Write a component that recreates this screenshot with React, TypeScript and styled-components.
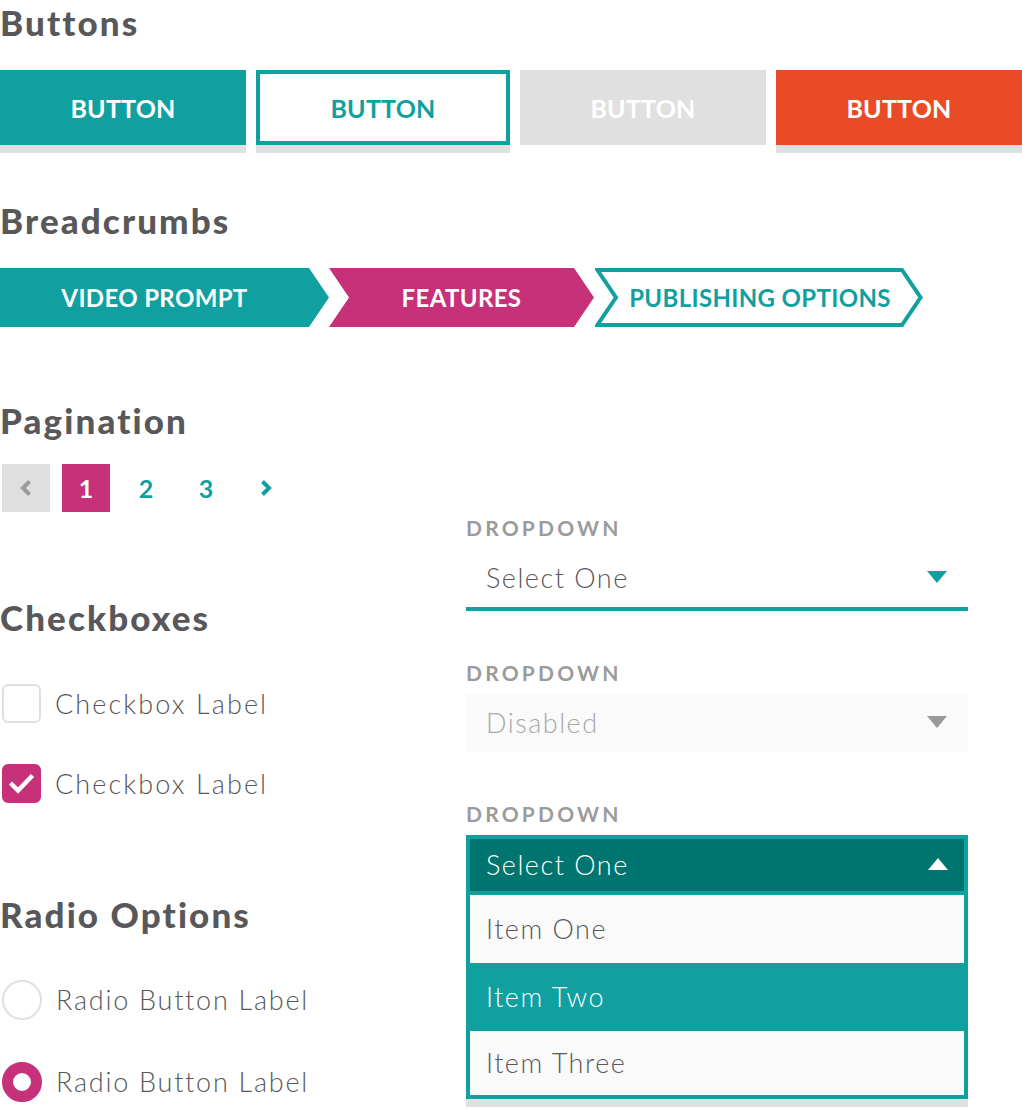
import React from "react";
import styled, { createGlobalStyle } from "styled-components";

const TEAL = "#0fa09f";
const DARK_TEAL = "#00756f";
const MAGENTA = "#c6317a";
const ORANGE = "#e94b27";
const GRAY = "#e0e0e0";
const TEXT = "#58585a";
const LABEL = "#9b9b9b";

const GlobalStyle = createGlobalStyle`
  html, body { margin: 0; padding: 0; background: #ffffff; }
  body { font-family: "Lato", "Open Sans", sans-serif; color: ${TEXT}; overflow: hidden; }
  * { box-sizing: border-box; }
`;

const Page = styled.div`
  width: 1022px;
  display: flex;
  flex-direction: column;
`;

const Heading = styled.h2<{ $mt: number; $mb: number }>`
  margin: ${(p) => p.$mt}px 0 ${(p) => p.$mb}px;
  font-family: "Lato", sans-serif;
  font-weight: 900;
  font-size: 35px;
  line-height: 40px;
  letter-spacing: 2.1px;
  color: ${TEXT};
`;

const ButtonRow = styled.div`
  display: flex;
  gap: 10px;
`;

type BtnKind = "primary" | "outline" | "disabled" | "danger";

const Button = styled.button<{ $kind: BtnKind }>`
  flex: 1;
  height: 75px;
  padding: 0;
  margin: 0;
  font-family: "Lato", sans-serif;
  font-weight: 700;
  font-size: 25px;
  letter-spacing: 0.2px;
  cursor: pointer;
  border: ${(p) => (p.$kind === "outline" ? `4px solid ${TEAL}` : "none")};
  background: ${(p) =>
    p.$kind === "primary" ? TEAL : p.$kind === "outline" ? "#fff" : p.$kind === "disabled" ? GRAY : ORANGE};
  color: ${(p) => (p.$kind === "outline" ? TEAL : "#fff")};
  box-shadow: ${(p) => (p.$kind === "disabled" ? "none" : `0 8px 0 ${GRAY}`)};
`;

const CrumbRow = styled.div`
  display: flex;
  height: 59px;
`;

const Crumb = styled.div<{ $w: number; $bg: string; $first?: boolean }>`
  position: relative;
  width: ${(p) => p.$w}px;
  height: 59px;
  flex: none;
  display: flex;
  align-items: center;
  justify-content: center;
  padding-left: ${(p) => (p.$first ? 0 : 20)}px;
  padding-right: 20px;
  background: ${(p) => p.$bg};
  clip-path: ${(p) =>
    p.$first
      ? "polygon(0 0, calc(100% - 20px) 0, 100% 50%, calc(100% - 20px) 100%, 0 100%)"
      : "polygon(0 0, calc(100% - 20px) 0, 100% 50%, calc(100% - 20px) 100%, 0 100%, 20px 50%)"};
`;

const OutlineCrumb = styled.div<{ $w: number }>`
  position: relative;
  width: ${(p) => p.$w}px;
  height: 59px;
  flex: none;
  margin-left: 1px;
  display: flex;
  align-items: center;
  justify-content: center;
  padding-left: 22px;
  padding-right: 20px;
`;

const CrumbShape = styled.svg`
  position: absolute;
  inset: 0;
`;

const CrumbText = styled.span<{ $color: string }>`
  position: relative;
  font-family: "Lato", sans-serif;
  font-weight: 700;
  font-size: 24px;
  letter-spacing: 0.35px;
  color: ${(p) => p.$color};
  white-space: nowrap;
`;

const Columns = styled.div`
  display: grid;
  grid-template-columns: 466px 502px;
`;

const Column = styled.div<{ $pt?: number }>`
  display: flex;
  flex-direction: column;
  padding-top: ${(p) => p.$pt ?? 0}px;
`;

const Pager = styled.div`
  display: flex;
  gap: 12px;
  padding-left: 2px;
`;

type PageKind = "prev" | "active" | "plain";

const PageItem = styled.div<{ $kind: PageKind }>`
  width: 48px;
  height: 48px;
  display: flex;
  align-items: center;
  justify-content: center;
  font-family: "Lato", sans-serif;
  font-weight: 700;
  font-size: 25px;
  background: ${(p) => (p.$kind === "prev" ? GRAY : p.$kind === "active" ? MAGENTA : "transparent")};
  color: ${(p) => (p.$kind === "active" ? "#fff" : TEAL)};
`;

const OptionList = styled.div<{ $gap: number }>`
  display: flex;
  flex-direction: column;
  gap: ${(p) => p.$gap}px;
  padding-left: 2px;
`;

const OptionRow = styled.label`
  display: flex;
  align-items: center;
  gap: 14px;
  height: 39px;
`;

const CheckBox = styled.span<{ $checked?: boolean }>`
  width: 39px;
  height: 39px;
  flex: none;
  border-radius: 6px;
  border: 2px solid ${(p) => (p.$checked ? MAGENTA : GRAY)};
  background: ${(p) => (p.$checked ? MAGENTA : "#fff")};
  display: flex;
  align-items: center;
  justify-content: center;
`;

const Radio = styled.span<{ $checked?: boolean }>`
  width: 40px;
  height: 40px;
  flex: none;
  border-radius: 50%;
  border: ${(p) => (p.$checked ? `11px solid ${MAGENTA}` : `2px solid ${GRAY}`)};
  background: #fff;
`;

const OptionLabel = styled.span<{ $ls: number }>`
  font-family: "Lato", sans-serif;
  font-weight: 300;
  font-size: 27px;
  letter-spacing: ${(p) => p.$ls}px;
  color: ${TEXT};
  white-space: nowrap;
`;

const Field = styled.div`
  display: flex;
  flex-direction: column;
  margin-bottom: 50px;
`;

const FieldLabel = styled.div`
  font-family: "Lato", sans-serif;
  font-weight: 700;
  font-size: 21px;
  line-height: 24px;
  letter-spacing: 3.2px;
  color: ${LABEL};
  margin-bottom: 9px;
`;

type SelectKind = "default" | "disabled";

const SelectBox = styled.div<{ $kind: SelectKind }>`
  height: ${(p) => (p.$kind === "default" ? 62 : 58)}px;
  display: flex;
  align-items: center;
  justify-content: space-between;
  padding: 0 21px 2px 20px;
  background: ${(p) => (p.$kind === "disabled" ? "#fafafa" : "#fff")};
  border-bottom: ${(p) => (p.$kind === "default" ? `4px solid ${TEAL}` : "none")};
`;

const SelectText = styled.span<{ $color: string }>`
  font-family: "Lato", sans-serif;
  font-weight: 300;
  font-size: 27px;
  letter-spacing: 1.5px;
  color: ${(p) => p.$color};
`;

const OpenSelect = styled.div`
  border: 4px solid ${TEAL};
  background: ${TEAL};
  box-shadow: 0 8px 0 ${GRAY};
  display: flex;
  flex-direction: column;
`;

const OpenHeader = styled.div`
  height: 56px;
  border-bottom: 4px solid ${TEAL};
  background: ${DARK_TEAL};
  display: flex;
  align-items: center;
  justify-content: space-between;
  padding: 0 16px 2px;
`;

const MenuItem = styled.div<{ $h: number; $selected?: boolean }>`
  height: ${(p) => p.$h}px;
  display: flex;
  align-items: center;
  padding: 0 16px 2px;
  background: ${(p) => (p.$selected ? TEAL : "#fafafa")};
  margin: 0 ${(p) => (p.$selected ? -4 : 0)}px;
  padding-left: ${(p) => (p.$selected ? 20 : 16)}px;
`;

const Triangle = ({ color, up }: { color: string; up?: boolean }) => (
  <svg width="20" height="12" viewBox="0 0 20 12">
    <polygon points={up ? "10,0 20,12 0,12" : "0,0 20,0 10,12"} fill={color} />
  </svg>
);

const Chevron = ({ color, left }: { color: string; left?: boolean }) => (
  <svg width="14" height="18" viewBox="0 0 14 18">
    <polyline
      points={left ? "10.5,2.5 4,9 10.5,15.5" : "3.5,2.5 10,9 3.5,15.5"}
      fill="none"
      stroke={color}
      strokeWidth="4"
      strokeLinecap="butt"
      strokeLinejoin="miter"
    />
  </svg>
);

const Check = () => (
  <svg width="39" height="39" viewBox="0 0 39 39" style={{ margin: -2 }}>
    <polyline points="8.5,19 16,26.5 30.5,11.5" fill="none" stroke="#fff" strokeWidth="4.5" />
  </svg>
);

export default function App() {
  const outlineW = 328;
  return (
    <>
      <GlobalStyle />
      <Page>
        <Heading $mt={2} $mb={28}>Buttons</Heading>
        <ButtonRow>
          <Button $kind="primary">BUTTON</Button>
          <Button $kind="outline">BUTTON</Button>
          <Button $kind="disabled">BUTTON</Button>
          <Button $kind="danger">BUTTON</Button>
        </ButtonRow>

        <Heading $mt={55} $mb={28}>Breadcrumbs</Heading>
        <CrumbRow>
          <Crumb $w={329} $bg={TEAL} $first>
            <CrumbText $color="#fff">VIDEO PROMPT</CrumbText>
          </Crumb>
          <Crumb $w={265} $bg={MAGENTA}>
            <CrumbText $color="#fff">FEATURES</CrumbText>
          </Crumb>
          <OutlineCrumb $w={outlineW}>
            <CrumbShape width={outlineW} height={59} viewBox={`0 0 ${outlineW} 59`}>
              <polygon
                points={`2.4,2 ${outlineW - 21},2 ${outlineW - 2.4},29.5 ${outlineW - 21},57 2.4,57 21,29.5`}
                fill="#fff"
                stroke={TEAL}
                strokeWidth="4"
              />
            </CrumbShape>
            <CrumbText $color={TEAL}>PUBLISHING OPTIONS</CrumbText>
          </OutlineCrumb>
        </CrumbRow>

        <Columns>
          <Column>
            <Heading $mt={73} $mb={24}>Pagination</Heading>
            <Pager>
              <PageItem $kind="prev">
                <Chevron color="#9b9b9b" left />
              </PageItem>
              <PageItem $kind="active">1</PageItem>
              <PageItem $kind="plain">2</PageItem>
              <PageItem $kind="plain">3</PageItem>
              <PageItem $kind="plain">
                <Chevron color={TEAL} />
              </PageItem>
            </Pager>

            <Heading $mt={85} $mb={47}>Checkboxes</Heading>
            <OptionList $gap={41}>
              <OptionRow>
                <CheckBox />
                <OptionLabel $ls={2.1}>Checkbox Label</OptionLabel>
              </OptionRow>
              <OptionRow>
                <CheckBox $checked>
                  <Check />
                </CheckBox>
                <OptionLabel $ls={2.1}>Checkbox Label</OptionLabel>
              </OptionRow>
            </OptionList>

            <Heading $mt={91} $mb={46}>Radio Options</Heading>
            <OptionList $gap={43}>
              <OptionRow>
                <Radio />
                <OptionLabel $ls={1.75}>Radio Button Label</OptionLabel>
              </OptionRow>
              <OptionRow>
                <Radio $checked />
                <OptionLabel $ls={1.75}>Radio Button Label</OptionLabel>
              </OptionRow>
            </OptionList>
          </Column>

          <Column $pt={189}>
            <Field>
              <FieldLabel>DROPDOWN</FieldLabel>
              <SelectBox $kind="default">
                <SelectText $color={TEXT}>Select One</SelectText>
                <Triangle color={TEAL} />
              </SelectBox>
            </Field>
            <Field>
              <FieldLabel>DROPDOWN</FieldLabel>
              <SelectBox $kind="disabled">
                <SelectText $color="#a8a8a8">Disabled</SelectText>
                <Triangle color="#999999" />
              </SelectBox>
            </Field>
            <Field>
              <FieldLabel>DROPDOWN</FieldLabel>
              <OpenSelect>
                <OpenHeader>
                  <SelectText $color="#fff">Select One</SelectText>
                  <Triangle color="#fff" up />
                </OpenHeader>
                <MenuItem $h={68}>
                  <SelectText $color={TEXT}>Item One</SelectText>
                </MenuItem>
                <MenuItem $h={68} $selected>
                  <SelectText $color="#fff">Item Two</SelectText>
                </MenuItem>
                <MenuItem $h={64}>
                  <SelectText $color={TEXT}>Item Three</SelectText>
                </MenuItem>
              </OpenSelect>
            </Field>
          </Column>
        </Columns>
      </Page>
    </>
  );
}
